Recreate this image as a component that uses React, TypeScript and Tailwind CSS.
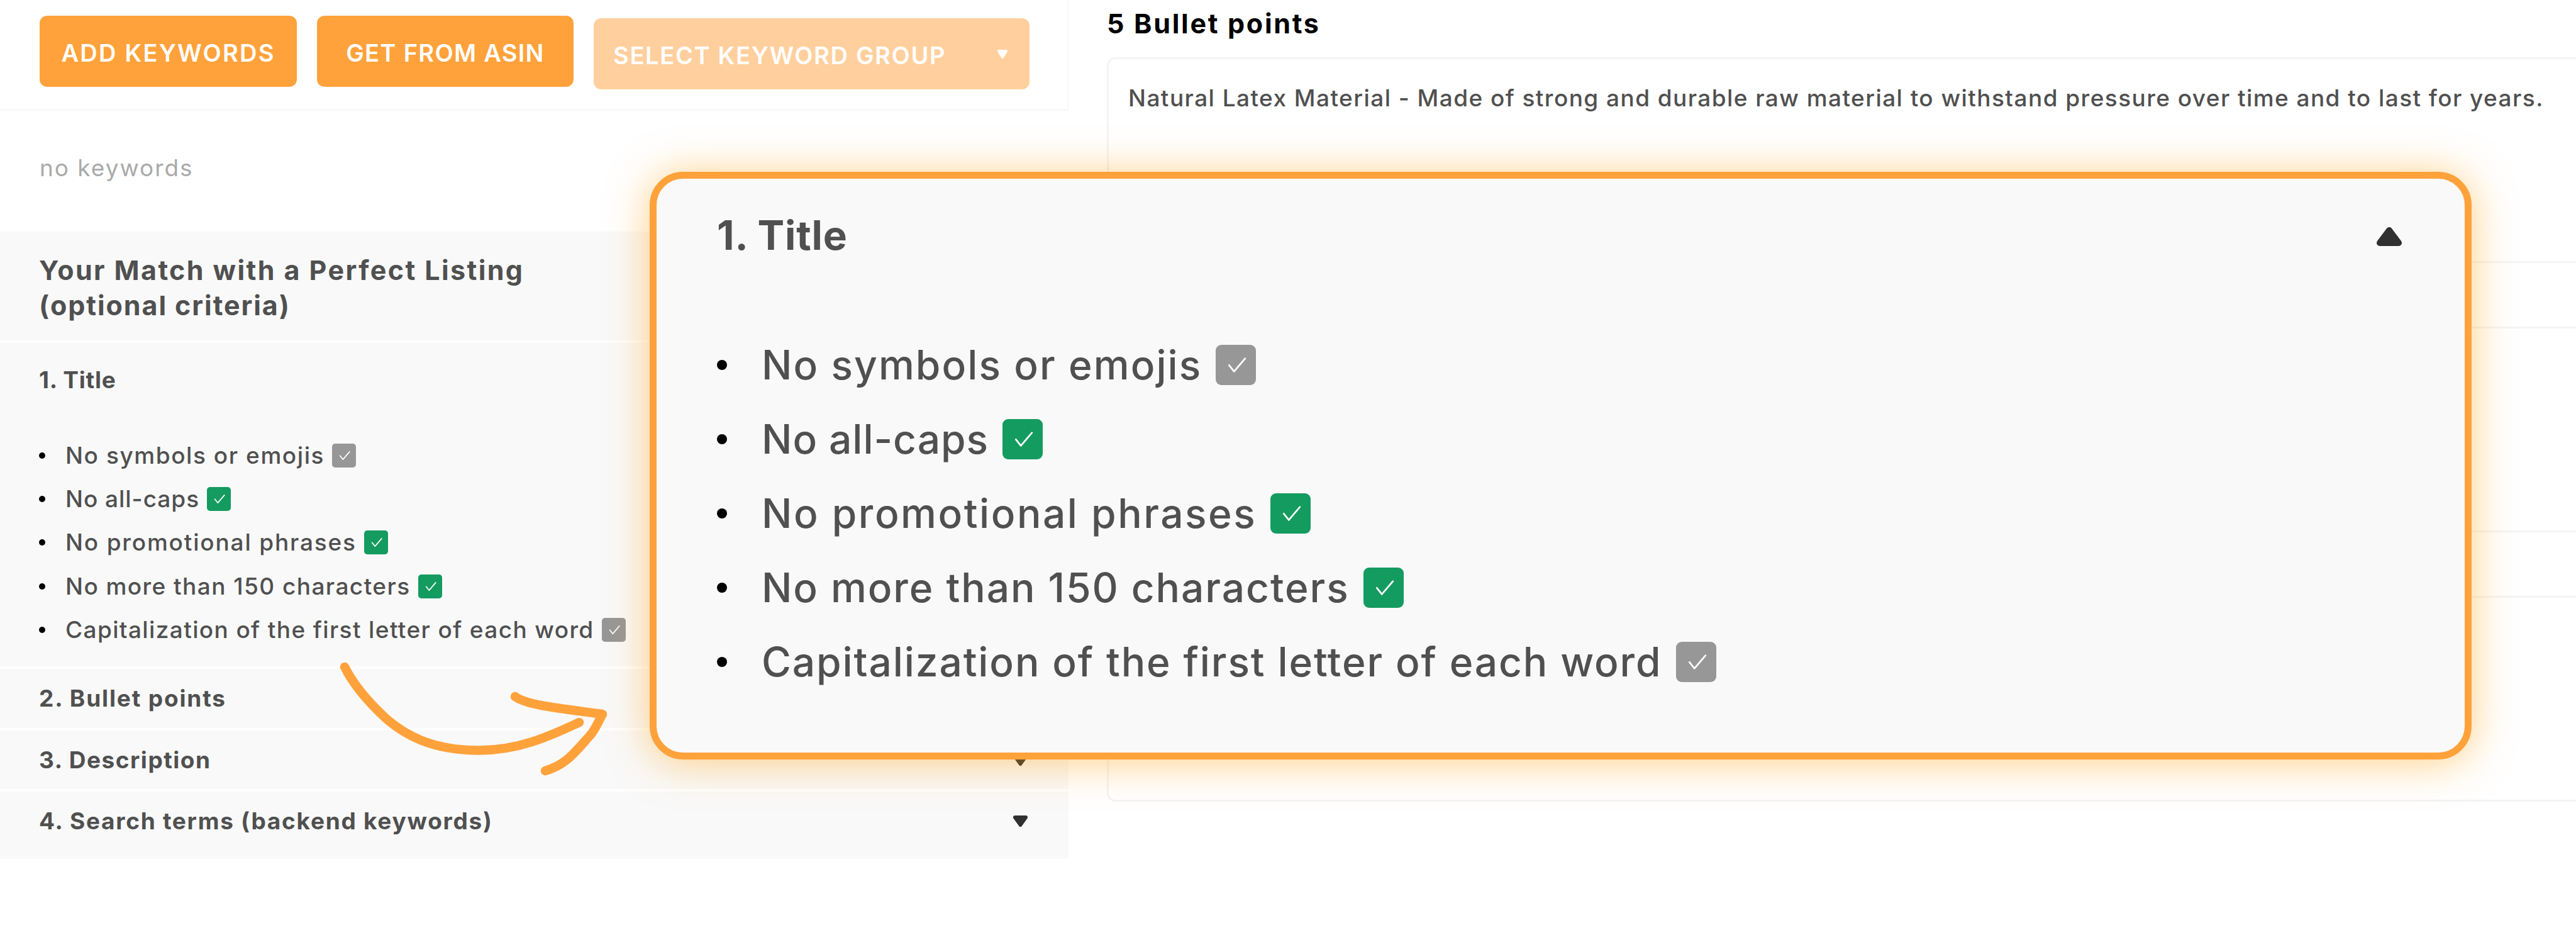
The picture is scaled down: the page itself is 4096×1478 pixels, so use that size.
import clsx from 'clsx'

interface Criterion {
  label: string
  passed: boolean
  tracking: string
  zoomedTracking: string
}

interface SectionRowProps {
  title: string
  className: string
  tracking: string
}

const criteria: Criterion[] = [
  { label: 'No symbols or emojis', passed: false, tracking: 'tracking-[1.57px]', zoomedTracking: 'tracking-[2.1px]' },
  { label: 'No all-caps', passed: true, tracking: 'tracking-[0.96px]', zoomedTracking: 'tracking-[0.97px]' },
  { label: 'No promotional phrases', passed: true, tracking: 'tracking-[1.82px]', zoomedTracking: 'tracking-[2.54px]' },
  { label: 'No more than 150 characters', passed: true, tracking: 'tracking-[1.43px]', zoomedTracking: 'tracking-[1.95px]' },
  {
    label: 'Capitalization of the first letter of each word',
    passed: false,
    tracking: 'tracking-[1.37px]',
    zoomedTracking: 'tracking-[1.89px]',
  },
]

function Caret({ className, up = false }: { className: string; up?: boolean }) {
  return (
    <svg viewBox="0 0 40 30" preserveAspectRatio="none" className={clsx('shrink-0', className)}>
      <path
        d={up ? 'M20 5 35 25H5Z' : 'M20 25 5 5h30Z'}
        fill="currentColor"
        stroke="currentColor"
        strokeWidth="10"
        strokeLinejoin="round"
      />
    </svg>
  )
}

function CheckBadge({ passed, className }: { passed: boolean; className: string }) {
  return (
    <span className={clsx('shrink-0', passed ? 'bg-[#149b5f]' : 'bg-[#979797]', className)}>
      <svg viewBox="0 0 70 70" className="h-full w-full">
        <path
          d="M23.3 35.3 32 46.3 51.3 23.7"
          fill="none"
          stroke="white"
          strokeWidth="3"
          strokeLinecap="round"
          strokeLinejoin="round"
        />
      </svg>
    </span>
  )
}

function CriteriaList({ zoomed = false }: { zoomed?: boolean }) {
  return (
    <ul className={clsx('font-medium', zoomed ? 'text-[64px]' : 'text-[37px]')}>
      {criteria.map((item) => (
        <li key={item.label} className={clsx('flex items-center', zoomed ? 'h-[118px]' : 'h-[69.3px]')}>
          <span
            className={clsx('shrink-0 rounded-full bg-black', zoomed ? 'mr-[55px] h-4 w-4' : 'mr-[32px] h-[10px] w-[10px]')}
          />
          <span className={clsx('whitespace-nowrap', zoomed ? item.zoomedTracking : item.tracking)}>{item.label}</span>
          <CheckBadge
            passed={item.passed}
            className={zoomed ? 'ml-[22px] h-[64px] w-[64px] rounded-[9px]' : 'ml-[12px] h-[38px] w-[38px] rounded-[5px]'}
          />
        </li>
      ))}
    </ul>
  )
}

function SectionRow({ title, className, tracking }: SectionRowProps) {
  return (
    <div className={clsx('flex items-center justify-between bg-[#f9f9f9] pr-[65px] pl-[62px]', className)}>
      <h3 className={clsx('text-[37px] font-bold', tracking)}>{title}</h3>
      <Caret className="h-[18px] w-[23px] text-[#303030]" />
    </div>
  )
}

function KeywordToolbar() {
  return (
    <div className="flex h-[176px] gap-[32px] border-r-2 border-b-[3px] border-[#f8f8f8] pt-[25px] pl-[63px] text-[38px] font-semibold text-white">
      <button className="h-[113px] w-[409px] rounded-[12px] bg-[#ffa23b] pt-[6px] tracking-[2.25px]">ADD KEYWORDS</button>
      <button className="h-[113px] w-[408px] rounded-[12px] bg-[#ffa23b] pt-[6px] tracking-[1.31px]">GET FROM ASIN</button>
      <button className="mt-[4px] flex h-[113px] w-[693px] items-center justify-between rounded-[12px] bg-[#ffcf9d] pt-[5px] pr-[35px] pl-[31px] tracking-[1.67px]">
        SELECT KEYWORD GROUP
        <Caret className="mb-[5px] h-[14px] w-[16px]" />
      </button>
    </div>
  )
}

function Sidebar() {
  return (
    <aside className="w-[1699px] shrink-0 text-[#505050]">
      <KeywordToolbar />
      <p className="h-[192px] pt-[69px] pl-[63px] text-[37px] leading-[44px] tracking-[1.97px] text-[#aaaaaa]">no keywords</p>
      <div className="h-[176px] border-b-[3px] border-white bg-[#f9f9f9] pt-[33px] pl-[62px] text-[43px] leading-[56px] font-bold">
        <p className="tracking-[2.4px]">Your Match with a Perfect Listing</p>
        <p className="tracking-[1.93px]">(optional criteria)</p>
      </div>
      <div className="h-[519px] border-b-4 border-white bg-[#f9f9f9] pt-[38px] pl-[62px]">
        <h3 className="mb-[63px] text-[37px] leading-[44px] font-bold tracking-[0.77px]">1. Title</h3>
        <CriteriaList />
      </div>
      <SectionRow title="2. Bullet points" className="h-[98px] border-b-4 border-white" tracking="tracking-[1.85px]" />
      <SectionRow title="3. Description" className="h-[97px] border-b-4 border-white" tracking="tracking-[1.52px]" />
      <SectionRow title="4. Search terms (backend keywords)" className="h-[107px] pb-[14px]" tracking="tracking-[1.73px]" />
    </aside>
  )
}

function BulletPoints() {
  const fieldClass = 'h-[327px] rounded-l-[14px] border-[3px] border-r-0 border-[#f4f4f4]'

  return (
    <main className="min-w-0 flex-1 pt-[9px] pl-[61px]">
      <h2 className="mb-[26px] text-[43px] leading-[56px] font-bold tracking-[2.7px] text-black">5 Bullet points</h2>
      <div className="flex flex-col gap-[101px]">
        <div className={clsx(fieldClass, 'pt-[40px] pl-[31px]')}>
          <p className="text-[37px] leading-[44px] font-medium tracking-[1.43px] whitespace-nowrap text-[#505050]">
            Natural Latex Material - Made of strong and durable raw material to withstand pressure over time and to last for years.
          </p>
        </div>
        <div className={fieldClass} />
        <div className={fieldClass} />
      </div>
    </main>
  )
}

// Enlarged copy of the "Title" section, floating over the page
function TitleCallout() {
  return (
    <section className="absolute top-[273px] left-[1033px] h-[934px] w-[2897px] rounded-[53px] border-[11px] border-[#ffa23b] bg-[#f9f9f9] pt-[50px] pr-[100px] pl-[96px] text-[#505050] shadow-[0_4px_66px_rgba(255,160,10,0.5)]">
      <div className="mb-[107px] flex items-center justify-between">
        <h2 className="text-[64px] leading-[80px] font-bold tracking-[0.79px]">1. Title</h2>
        <Caret up className="mt-[4px] h-[30px] w-[40px] text-[#303030]" />
      </div>
      <CriteriaList zoomed />
    </section>
  )
}

function HandDrawnArrow() {
  return (
    <svg viewBox="530 1040 450 210" className="absolute top-[1040px] left-[530px] h-[210px] w-[450px]">
      <g fill="none" stroke="#ffa23b" strokeWidth="14.5" strokeLinecap="round" strokeLinejoin="round">
        <path d="M548 1060C564 1092 590 1120 615 1143C642 1166 684 1192.500 761 1192.500C824 1192.500 872 1171 921 1148" />
        <path d="M819 1107C838 1121 892 1126 958 1135C951 1147 947 1159 938 1169C913 1197 899 1216 867 1225" />
      </g>
    </svg>
  )
}

export default function App() {
  return (
    <div className="relative flex h-[1478px] w-[4096px] items-start overflow-hidden bg-white font-['Inter',sans-serif]">
      <Sidebar />
      <BulletPoints />
      <TitleCallout />
      <HandDrawnArrow />
    </div>
  )
}
